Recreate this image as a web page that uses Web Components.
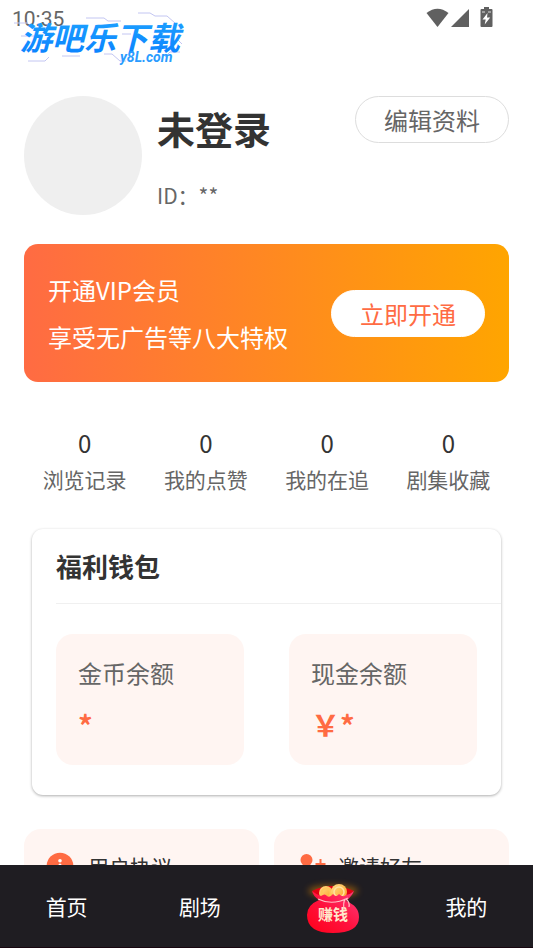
<!DOCTYPE html>
<html lang="zh-CN">
<head>
<meta charset="utf-8">
<meta name="viewport" content="width=device-width, initial-scale=1">
<title>我的</title>
<style>
html, body { height: 100%; margin: 0; }
body { font-family: "Noto Sans CJK SC", sans-serif; background: #fff; color: #333; }
</style>
</head>
<body>
<app-shell>
  <status-bar slot="top" time="10:35"></status-bar>
  <user-profile name="未登录" uid="**"></user-profile>
  <vip-banner>
    <span>开通VIP会员</span>
    <span>享受无广告等八大特权</span>
    <pill-button slot="action" variant="solid">立即开通</pill-button>
  </vip-banner>
  <stat-row>
    <stat-item value="0">浏览记录</stat-item>
    <stat-item value="0">我的点赞</stat-item>
    <stat-item value="0">我的在追</stat-item>
    <stat-item value="0">剧集收藏</stat-item>
  </stat-row>
  <wallet-card heading="福利钱包">
    <balance-box label="金币余额">*</balance-box>
    <balance-box label="现金余额">￥*</balance-box>
  </wallet-card>
  <tile-grid>
    <menu-tile>
      <svg slot="icon" width="28" height="28" viewBox="0 0 28 28" aria-hidden="true"><circle cx="14" cy="14" r="13.3" fill="#ff6b43"/><circle cx="14" cy="8.8" r="1.8" fill="#fff"/><path d="M14 13v8" stroke="#fff" stroke-width="3" stroke-linecap="round"/></svg>
      用户协议
    </menu-tile>
    <menu-tile>
      <svg slot="icon" width="28" height="28" viewBox="0 0 28 28" aria-hidden="true"><circle cx="10.500" cy="8" r="6" fill="#ff6b43"/><path d="M1 25c0-7 4-9.500 9.500-9.500S20 18 20 25z" fill="#ff6b43"/><path d="M24.500 7v10M19.500 12h10" stroke="#ff6b43" stroke-width="2"/></svg>
      邀请好友
    </menu-tile>
  </tile-grid>
  <nav-bar slot="bottom">
    <nav-item>首页</nav-item>
    <nav-item>剧场</nav-item>
    <nav-item><money-bag></money-bag></nav-item>
    <nav-item>我的</nav-item>
  </nav-bar>
</app-shell>
<script>
const define = (name, markup) => customElements.define(name, class extends HTMLElement {
  constructor() {
    super();
    this.attachShadow({ mode: "open" }).innerHTML = markup(this);
  }
});

define("app-shell", () => `
<style>
:host { display: flex; flex-direction: column; height: 100%; }
main { flex: 1; min-height: 0; overflow: auto; scrollbar-width: none; padding: 0 24px; }
</style>
<slot name="top"></slot><main><slot></slot></main><slot name="bottom"></slot>`);

define("status-bar", el => `
<style>
:host { display: flex; justify-content: space-between; padding: 6px 40px 0 12px; height: 66px; position: relative; color: #666; }
time { font-family: Roboto, sans-serif; font-size: 21px; line-height: 26px; }
.icons { display: flex; gap: 2px; height: 24px; }
.mark { position: absolute; left: 12px; top: 12px; }
</style>
<time>${el.getAttribute("time")}</time>
<svg class="icons" width="68" height="24" viewBox="0 0 68 24" fill="#606060" aria-hidden="true">
  <path d="M1.500 7Q12.500-1.500 23.500 7L12.500 21z"/><path d="M44 3v18H26z"/>
  <path d="M59 1h5v2h2.500q1 0 1 1v16q0 1-1 1h-10q-1 0-1-1V4q0-1 1-1H59z"/>
  <path d="M62.500 7l-5 6.500h3.200l-1 5 5.500-7h-3.200z" fill="#fff"/><path d="M57 6h3m3 0h3" stroke="#ddd"/>
</svg>
<svg class="mark" width="176" height="56" viewBox="0 0 176 56" aria-label="游吧乐下载 y8L.com">
  <defs><linearGradient id="g" x1="0" y1="0" x2="0" y2="1"><stop offset="0" stop-color="#20a6ff"/><stop offset="1" stop-color="#087fff"/></linearGradient></defs>
  <g fill="none" stroke="#c3c6f2" stroke-width="1"><path d="M74 6h18l4 3h13M126 1h12l5 3h12l8 7M2 11h14M9 24h14M9 38h12M16 49h17l4-4M50 44h18M92 42h8l8 7h6M164 26l6 6M110 22h9M168 40h-10l-5 5"/></g>
  <text x="8" y="38" font-family="Noto Sans CJK SC, sans-serif" font-size="32" font-weight="700" font-style="italic" fill="url(#g)">游吧乐下载</text>
  <text x="108" y="50" font-family="Roboto, sans-serif" font-size="14" font-weight="700" font-style="italic" fill="#2a9cff">y8L.com</text>
</svg>`);

define("pill-button", () => `
<style>
:host { display: block; flex: none; }
button { font: inherit; font-size: 24px; line-height: 45px; padding: 0 28px; border: 1px solid #ddd; border-radius: 24px; background: #fff; color: #666; display: block; }
:host([variant=solid]) button { border-color: #fff; color: #ff6b43; }
</style>
<button type="button"><slot></slot></button>`);

define("user-profile", el => `
<style>
:host { display: flex; align-items: flex-start; padding-top: 24px; }
.avatar { width: 118px; height: 119px; border-radius: 50%; background: #efefef; flex: none; }
.info { flex: 1; padding-left: 15px; }
h1 { margin: 0; font-size: 38px; line-height: 64px; font-weight: 700; }
p { margin: 0; padding-top: 20px; font-size: 21px; line-height: 30px; color: #666; }
</style>
<div class="avatar"></div>
<div class="info"><h1>${el.getAttribute("name")}</h1><p>ID：${el.getAttribute("uid")}</p></div>
<pill-button>编辑资料</pill-button>`);

define("vip-banner", () => `
<style>
:host { display: flex; align-items: center; justify-content: space-between; margin-top: 29px; padding: 22px 24px; border-radius: 14px; background: linear-gradient(90deg, #ff6b43, #ffa500); color: #fff; font-size: 24px; line-height: 47px; }
.text { display: flex; flex-direction: column; white-space: nowrap; }
</style>
<div class="text"><slot></slot></div><slot name="action"></slot>`);

define("stat-row", () => `
<style>:host { display: grid; grid-template-columns: repeat(4, 1fr); padding: 43px 0 32px; }</style>
<slot></slot>`);

define("stat-item", el => `
<style>
:host { display: flex; flex-direction: column; align-items: center; font-size: 21px; line-height: 36px; color: #666; }
b { font-size: 24px; font-weight: 400; color: #333; }
</style>
<b>${el.getAttribute("value")}</b><span><slot></slot></span>`);

define("wallet-card", el => `
<style>
:host { display: block; margin: 0 8px; padding: 0 0 30px 24px; border-radius: 11px; background: #fff; box-shadow: 0 1px 3px rgba(0,0,0,.32); }
h2 { margin: 0; font-size: 26px; line-height: 74px; font-weight: 700; border-bottom: 1px solid #f0f0f0; }
.boxes { display: grid; grid-template-columns: 1fr 1fr; gap: 45px; padding: 30px 24px 0 0; }
</style>
<h2>${el.getAttribute("heading")}</h2><div class="boxes"><slot></slot></div>`);

define("balance-box", el => `
<style>
:host { display: block; padding: 14px 22px 15px; border-radius: 17px; background: #fff5f2; }
div { font-size: 24px; line-height: 50px; color: #666; }
strong { display: block; font-size: 29px; line-height: 52px; font-weight: 700; color: #ff6b43; }
</style>
<div>${el.getAttribute("label")}</div><strong><slot></slot></strong>`);

define("tile-grid", () => `
<style>:host { display: grid; grid-template-columns: 1fr 1fr; gap: 15px; padding: 34px 0 24px; }</style>
<slot></slot>`);

define("menu-tile", () => `
<style>
:host { display: block; }
button { font: inherit; font-size: 21px; line-height: 30px; color: #333; display: flex; align-items: center; gap: 14px; width: 100%; padding: 22px; border: 0; border-radius: 17px; background: #fff5f2; text-align: left; }
::slotted(svg) { flex: none; overflow: visible; }
</style>
<button type="button"><slot name="icon"></slot><span><slot></slot></span></button>`);

define("nav-bar", () => `
<style>
:host { display: block; flex: none; background: #1f1d22; border-bottom: 1px solid #180610; }
nav { display: grid; grid-template-columns: repeat(4, 1fr); height: 82px; }
</style>
<nav><slot></slot></nav>`);

define("nav-item", () => `
<style>
:host { display: flex; }
button { flex: 1; display: flex; align-items: center; justify-content: center; font: inherit; font-size: 21px; line-height: 30px; padding: 0; border: 0; background: none; color: #fff; }
</style>
<button type="button"><slot></slot></button>`);

define("money-bag", () => `
<style>:host { display: block; } svg { display: block; }</style>
<svg width="64" height="64" viewBox="0 0 64 64" aria-label="赚钱">
  <defs>
    <linearGradient id="b" x1="0" y1="1" x2="1" y2="0"><stop offset="0" stop-color="#ff0018"/><stop offset=".5" stop-color="#ff123e"/><stop offset="1" stop-color="#ff3d80"/></linearGradient>
    <linearGradient id="c" x1="0" y1="0" x2="1" y2="1"><stop offset="0" stop-color="#ffe08a"/><stop offset="1" stop-color="#ff9d20"/></linearGradient>
    <filter id="f" x="-30%" y="-60%" width="160%" height="220%"><feGaussianBlur stdDeviation="3"/></filter>
  </defs>
  <ellipse cx="32" cy="17" rx="25" ry="6" fill="#e98a00" opacity=".5" filter="url(#f)"/>
  <path d="M11 17Q31 7 53 17L44 24H19z" fill="#e30012"/>
  <circle cx="25" cy="19" r="7" fill="url(#c)"/><circle cx="25" cy="19" r="4.500" fill="none" stroke="#ffc65a" stroke-width="2"/>
  <circle cx="38" cy="18" r="8" fill="url(#c)"/><circle cx="38" cy="18" r="5" fill="none" stroke="#ffe3a0" stroke-width="1.500"/>
  <path d="M11 17Q16 21 20 22Q24 19 26 22Q29 24 32 20Q35 24 38 20Q42 24 45 21Q50 20 53 17Q51 22 45 27Q58 32 58 43Q58 59 32 59Q6 59 6 41Q6 31 18 26Q12 22 11 17z" fill="url(#b)"/>
  <path d="M17 25Q31 32 47 24M44 25Q42 29 43 35M45 25Q49 28 48 33" fill="none" stroke="#ffc0c4" stroke-width="1.200"/>
  <text x="17" y="46" font-family="Noto Sans CJK SC, sans-serif" font-size="15" font-weight="700" fill="#ffe8cc">赚钱</text>
</svg>`);
</script>
</body>
</html>
